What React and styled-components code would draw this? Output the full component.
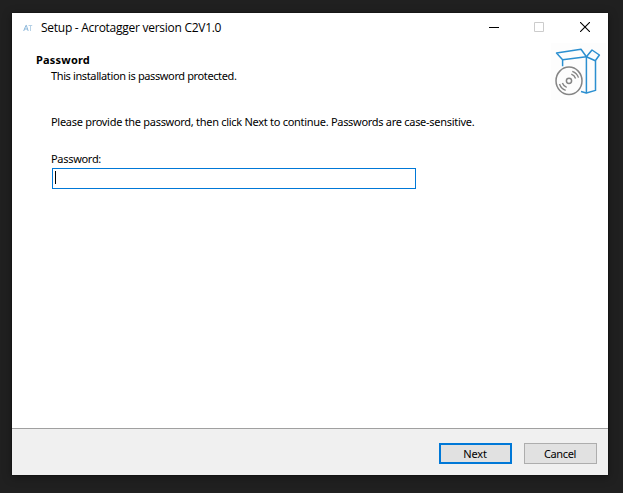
import React from "react";
import styled, { createGlobalStyle } from "styled-components";

const GlobalStyle = createGlobalStyle`
  * { box-sizing: border-box; }
  html, body { margin: 0; background: #202020; }
`;

const Desktop = styled.main`
  width: 623px;
  height: 493px;
  padding: 13px 15px 18px 12px;
  background: #202020;
  overflow: hidden;
`;

const Window = styled.section`
  display: flex;
  flex-direction: column;
  width: 596px;
  height: 462px;
  background: #fff;
  color: #000;
  font-family: Tahoma, "Noto Sans", sans-serif;
  font-size: 11px;
  line-height: 14px;
  box-shadow: 0 2px 9px rgba(0, 0, 0, 0.38), 0 0 1px #000;
`;

const TitleBar = styled.header`
  display: flex;
  height: 30px;
  padding-left: 11px;
`;

const AppIcon = styled.svg`
  width: 10px;
  height: 8px;
  margin: 11px 8px 0 0;
`;

const Title = styled.h1`
  flex: 1;
  margin: 6px 0 0;
  font: 400 12px/18px "Segoe UI", "Open Sans", sans-serif;
  letter-spacing: ${(p) => p.$tracking}px;
  white-space: nowrap;
`;

const Controls = styled.div`
  display: grid;
  grid-template-columns: 45px 46px 10px;
  width: 137px;
  padding: 9px 18px 0 18px;
`;

const ControlIcon = styled.svg`
  width: 10px;
  height: 10px;
`;

const Banner = styled.div`
  display: flex;
  justify-content: space-between;
  height: 58px;
  padding: 0 2px 0 24px;
`;

const Headings = styled.div`
  padding-top: 10px;
`;

const Text = styled.p`
  margin: 0;
  letter-spacing: ${(p) => p.$tracking || 0}px;
  white-space: nowrap;
`;

const Heading = styled(Text).attrs({ as: "h2" })`
  font-size: 11px;
  font-weight: 700;
`;

const Description = styled(Text)`
  margin: 2px 0 0 15px;
`;

const SetupArt = styled.svg`
  width: 55px;
  height: 57px;
  background: #fdfdfd;
`;

const Content = styled.div`
  flex: 1;
  padding: 14px 39px 0;
`;

const FieldLabel = styled(Text).attrs({ as: "label" })`
  display: block;
  margin-top: 23px;
`;

const PasswordField = styled.div`
  width: 364px;
  height: 21px;
  margin: 2px 0 0 1px;
  padding: 2px;
  border: 1px solid #0078d7;
`;

const Caret = styled.div`
  width: 1px;
  height: 13px;
  background: #000;
`;

const Footer = styled.footer`
  display: flex;
  gap: 12px;
  justify-content: flex-end;
  height: 47px;
  padding: 14px 11px 0 0;
  background: #f0f0f0;
  border-top: 1px solid #a0a0a0;
`;

const Button = styled.button`
  width: 73px;
  height: 21px;
  padding: 0 1px 0 0;
  border: ${(p) => (p.$primary ? "2px solid #0078d7" : "1px solid #adadad")};
  background: #e1e1e1;
  color: #000;
  font: inherit;
  letter-spacing: ${(p) => p.$tracking}px;
`;

export default function App() {
  return (
    <>
      <GlobalStyle />
      <Desktop>
        <Window>
          <TitleBar>
            <AppIcon viewBox="0 0 10 8" fill="none" stroke="#72a7d2" strokeWidth=".8">
              <path d="M.7 7 3 1.3h.3L5.2 7M1.5 5h3" />
              <path d="M5.5 1.5h3.7M7.5 1.5V7" stroke="#a6c6df" />
            </AppIcon>
            <Title $tracking={-0.27}>Setup - Acrotagger version C2V1.0</Title>
            <Controls>
              <ControlIcon viewBox="0 0 10 10"><path d="M0 5h10v1H0z" /></ControlIcon>
              <ControlIcon viewBox="0 0 10 10" fill="none" stroke="#ccc"><path d="M.5.5h9v9h-9z" /></ControlIcon>
              <ControlIcon viewBox="0 0 10 10" fill="none" stroke="#000" strokeWidth="1.1"><path d="m0 0 10 10M10 0 0 10" /></ControlIcon>
            </Controls>
          </TitleBar>
          <Banner>
            <Headings>
              <Heading $tracking={0.2}>Password</Heading>
              <Description $tracking={-0.38}>This installation is password protected.</Description>
            </Headings>
            <SetupArt viewBox="551 43 55 57" fill="none">
              <g stroke="#2b8fd0" strokeWidth="1.5" strokeLinejoin="round">
                <path d="m556.5 53 24.5-3.8 5.4 7.6-23.8 3z" />
                <path d="m586.4 56.8 5.6-6.8 7.4 5-4.1 5.8zV93l9.1-2.6V60.5" />
                <path d="M562.6 60v6.3M581 91.6l5.4 1.4" />
              </g>
              <g stroke="#858585" strokeWidth="1.5">
                <ellipse cx="569" cy="80.8" rx="13" ry="13.7" />
                <circle cx="569" cy="80.8" r="2.6" />
                <path d="M571.3 74.2A7 7 0 0 1 575.6 78.5M572.3 71.3A10 10 0 0 1 578.5 77.6M566.7 87.4A7 7 0 0 1 562.4 83.1M565.7 90.3A10 10 0 0 1 559.5 84" strokeWidth="1.4" />
              </g>
            </SetupArt>
          </Banner>
          <Content>
            <Text $tracking={-0.29}>Please provide the password, then click Next to continue. Passwords are case-sensitive.</Text>
            <FieldLabel $tracking={-0.3}>Password:</FieldLabel>
            <PasswordField role="textbox" aria-label="Password"><Caret /></PasswordField>
          </Content>
          <Footer>
            <Button $primary $tracking={-0.1}>Next</Button>
            <Button $tracking={-0.35}>Cancel</Button>
          </Footer>
        </Window>
      </Desktop>
    </>
  );
}
